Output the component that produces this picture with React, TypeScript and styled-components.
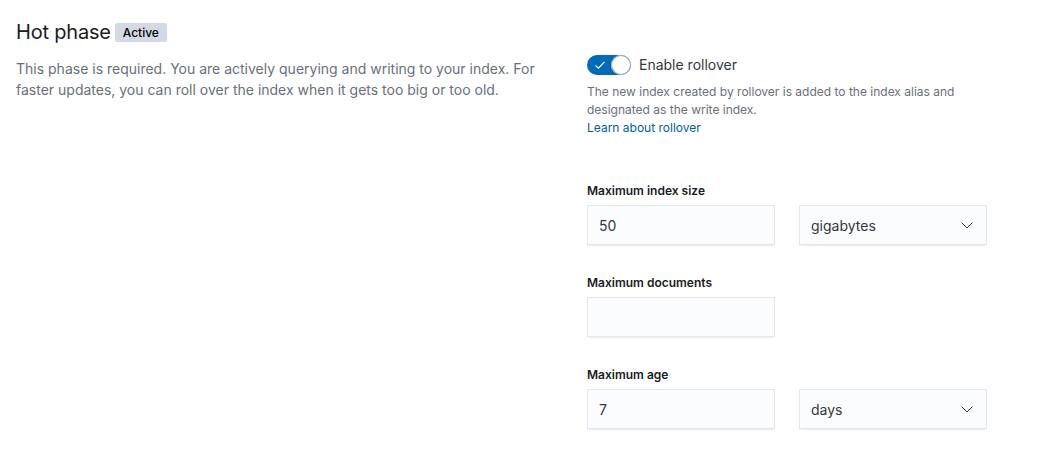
import React from "react";
import styled, { createGlobalStyle } from "styled-components";

const Global = createGlobalStyle`
  html, body { margin: 0; padding: 0; background: #fff; }
  body { font-family: Inter, "Noto Sans", "Liberation Sans", sans-serif; color: #343741; -webkit-font-smoothing: antialiased; }
  * { box-sizing: border-box; }
`;

const Page = styled.div`
  display: grid;
  grid-template-columns: 547px 400px;
  column-gap: 24px;
  padding: 20px 16px;
  width: 1064px;
`;

const TitleColumn = styled.div`
  display: flex;
  flex-direction: column;
  gap: 14px;
`;

const TitleRow = styled.div`
  display: flex;
  align-items: center;
  gap: 4px;
`;

const Title = styled.h2`
  margin: 0;
  font-size: 20px;
  line-height: 24px;
  font-weight: 400;
  color: #1a1c21;
  letter-spacing: -0.2px;
`;

const Badge = styled.span`
  display: inline-flex;
  align-items: center;
  height: 19px;
  padding: 0 8px;
  border-radius: 2px;
  background: #d3dae6;
  color: #000;
  font-size: 12px;
  font-weight: 500;
  line-height: 19px;
`;

const Description = styled.p`
  margin: 0;
  font-size: 14px;
  line-height: 21px;
  color: #69707d;
`;

const FieldColumn = styled.div`
  display: flex;
  flex-direction: column;
  padding-top: 35px;
`;

const SwitchRow = styled.label`
  display: flex;
  align-items: center;
  gap: 8px;
  font-size: 14px;
  line-height: 20px;
  color: #343741;
`;

const SwitchTrack = styled.span`
  position: relative;
  display: inline-block;
  width: 44px;
  height: 20px;
  border-radius: 20px;
  background: #006bb8;
  flex: none;
`;

const SwitchKnob = styled.span`
  position: absolute;
  right: 0;
  top: 0;
  width: 20px;
  height: 20px;
  border-radius: 50%;
  background: #fff;
  box-shadow: inset 0 0 0 1px #98a2b3;
`;

const SwitchCheck = styled.svg`
  position: absolute;
  left: 7px;
  top: 4px;
`;

const Help = styled.div`
  margin-top: 8px;
  font-size: 12px;
  line-height: 18px;
  color: #69707d;
`;

const Link = styled.a`
  color: #0061a6;
  text-decoration: none;
  display: block;
`;

const FormRow = styled.div<{ $first?: boolean }>`
  display: flex;
  flex-direction: column;
  margin-top: ${(p) => (p.$first ? "45px" : "29px")};
`;

const Label = styled.div`
  font-size: 12px;
  line-height: 18px;
  font-weight: 600;
  color: #1a1c21;
  margin-bottom: 5px;
`;

const Controls = styled.div`
  display: grid;
  grid-template-columns: 188px 188px;
  column-gap: 24px;
`;

const fieldStyle = `
  height: 40px;
  border: none;
  border-radius: 0;
  background: #fbfcfd;
  box-shadow: 0 1px 1px -1px rgba(152,162,179,.2), 0 3px 2px -2px rgba(152,162,179,.2), inset 0 0 0 1px rgba(17,43,134,.1);
  font-family: inherit;
  font-size: 14px;
  color: #343741;
  padding: 0 12px;
`;

const Input = styled.input`
  ${fieldStyle}
  width: 188px;
  outline: none;
`;

const Select = styled.div`
  ${fieldStyle}
  display: flex;
  align-items: center;
  justify-content: space-between;
`;

const Chevron = () => (
  <svg width="16" height="16" viewBox="0 0 16 16" fill="none">
    <path d="M2.5 5.5 L8 11 L13.5 5.5" stroke="#343741" strokeWidth="1" />
  </svg>
);

export default function App() {
  return (
    <>
      <Global />
      <Page>
        <TitleColumn>
          <TitleRow>
            <Title>Hot phase</Title>
            <Badge>Active</Badge>
          </TitleRow>
          <Description>
            This phase is required. You are actively querying and writing to your index. For faster
            updates, you can roll over the index when it gets too big or too old.
          </Description>
        </TitleColumn>
        <FieldColumn>
          <SwitchRow>
            <SwitchTrack>
              <SwitchCheck width="12" height="12" viewBox="0 0 12 12" fill="none">
                <path d="M1.5 6.5 L4.5 9.2 L10.5 2.8" stroke="#fff" strokeWidth="1.1" />
              </SwitchCheck>
              <SwitchKnob />
            </SwitchTrack>
            Enable rollover
          </SwitchRow>
          <Help>
            The new index created by rollover is added to the index alias and designated as the
            write index.
            <Link href="#">Learn about rollover</Link>
          </Help>
          <FormRow $first>
            <Label>Maximum index size</Label>
            <Controls>
              <Input defaultValue="50" />
              <Select>
                gigabytes
                <Chevron />
              </Select>
            </Controls>
          </FormRow>
          <FormRow>
            <Label>Maximum documents</Label>
            <Controls>
              <Input defaultValue="" />
            </Controls>
          </FormRow>
          <FormRow>
            <Label>Maximum age</Label>
            <Controls>
              <Input defaultValue="7" />
              <Select>
                days
                <Chevron />
              </Select>
            </Controls>
          </FormRow>
        </FieldColumn>
      </Page>
    </>
  );
}
